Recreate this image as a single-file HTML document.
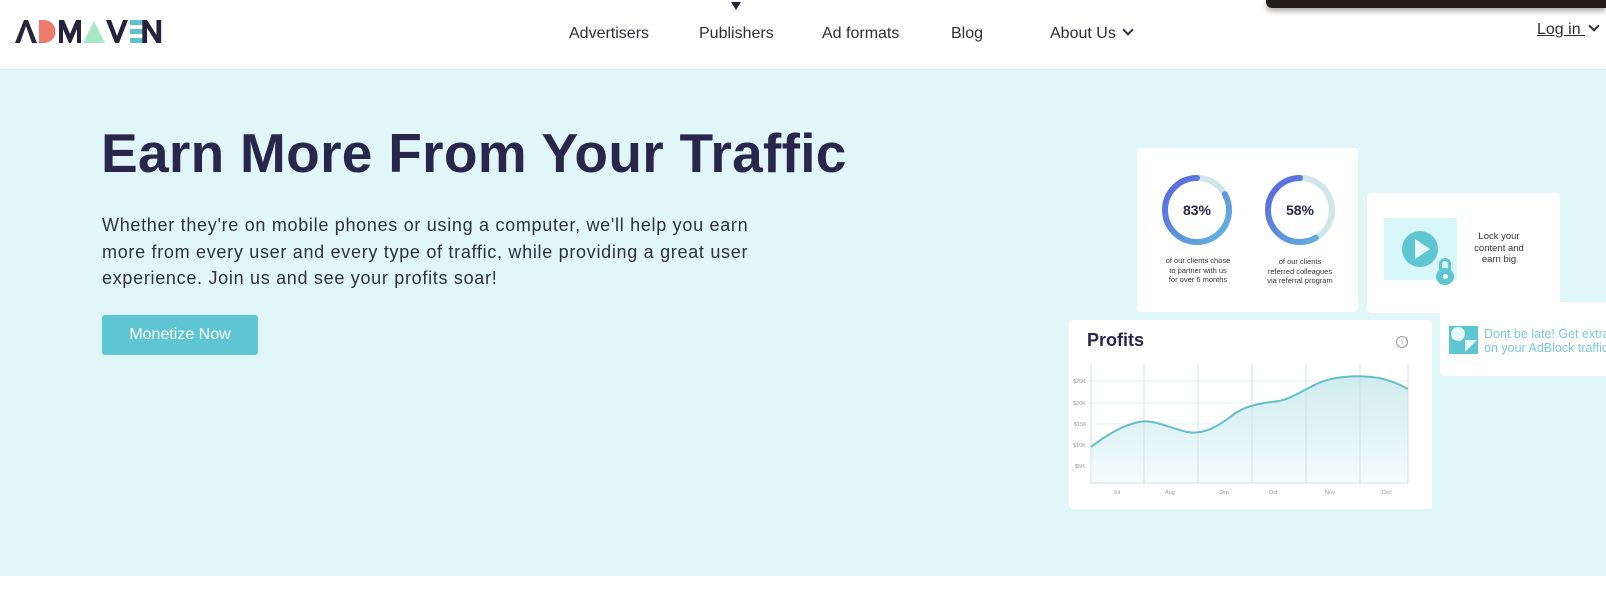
<!DOCTYPE html>
<html><head><meta charset="utf-8"><style>
*{margin:0;padding:0;box-sizing:border-box}
body{width:1606px;height:598px;overflow:hidden;background:#fff;font-family:"Liberation Sans",sans-serif;position:relative;color:#28264a}
.abs{position:absolute}
.nav a{position:absolute;top:25px;font-size:16px;color:#2e2e3a;text-decoration:none;white-space:nowrap}
.card{position:absolute;background:#fff;border-radius:4px}
</style></head><body>
<div class="abs" style="left:0;top:70px;width:1606px;height:506px;background:#e1f6f9"></div>
<div class="abs" style="left:0;top:69px;width:1606px;height:1px;background:#e3e6e8"></div>
<div class="abs" style="left:1266px;top:0;width:340px;height:8px;background:#231d1d;border-radius:0 0 0 6px;box-shadow:0 3px 6px rgba(0,0,0,.35)"></div>
<!-- logo -->
<svg class="abs" style="left:15px;top:20px" width="148" height="24" viewBox="0 0 148 24">
<path d="M0 23 L9 0 L13 0 L22 23 L17 23 L11 6 L5 23Z" fill="#26233a"/>
<path d="M24 0 H29 A11.5 11.5 0 0 1 29 23 H24Z" fill="#ee7a6b"/>
<path d="M44 23 V0 H49 L55 14 L61 0 H66 V23 H62 V9 L56 23 H54 L48 9 V23Z" fill="#26233a"/>
<path d="M68 23 L79 1 L90 23Z" fill="#a6e9c4"/>
<path d="M91 0 L96 0 L102 16 L108 0 L113 0 L104 23 L100 23Z" fill="#26233a"/>
<rect x="115" y="0" width="17" height="5" fill="#5fc3cf"/><rect x="115" y="9" width="13" height="5" fill="#5fc3cf"/><rect x="115" y="18" width="17" height="5" fill="#5fc3cf"/>
<path d="M127 23 V0 H132 L142 15 V0 H147 V23 H142 L132 8 V23Z" fill="#26233a" transform="translate(8 0) scale(0.94 1)"/>
</svg>
<div class="nav">
<a style="left:569px">Advertisers</a>
<a style="left:699px">Publishers</a>
<a style="left:822px">Ad formats</a>
<a style="left:951px">Blog</a>
<a style="left:1050px">About Us <span style="display:inline-block;width:8px;height:8px;border-right:2.5px solid #2e2e3a;border-bottom:2.5px solid #2e2e3a;transform:rotate(45deg);margin:0 0 4px 4px"></span></a>
<a style="left:1537px;top:21px;text-decoration:underline">Log in <span style="display:inline-block;width:8px;height:8px;border-right:2px solid #2e2e3a;border-bottom:2px solid #2e2e3a;transform:rotate(45deg);margin:0 0 4px 5px"></span></a>
</div>
<div class="abs" style="left:731px;top:2px;width:0;height:0;border-left:5px solid transparent;border-right:5px solid transparent;border-top:8px solid #26233a"></div>

<div class="abs" style="left:101px;top:121px;font-size:55px;font-weight:bold;color:#28264a;white-space:nowrap;letter-spacing:0.3px">Earn More From Your Traffic</div>
<div class="abs" style="left:102px;top:212px;width:665px;font-size:18px;line-height:26.5px;letter-spacing:0.7px;color:#2f2f3f">Whether they're on mobile phones or using a computer, we'll help you earn more from every user and every type of traffic, while providing a great user experience. Join us and see your profits soar!</div>
<div class="abs" style="left:102px;top:315px;width:156px;height:40px;background:#5ec6d2;border-radius:3px;color:#fff;font-size:16px;line-height:40px;text-align:center">Monetize Now</div>

<!-- card1 -->
<div class="card" style="left:1137px;top:148px;width:221px;height:164px">
<svg class="abs" style="left:22px;top:24px" width="76" height="76" viewBox="0 0 76 76">
<defs><linearGradient id="g1" x1="0" y1="0" x2="1" y2="1"><stop offset="0" stop-color="#62b8dc"/><stop offset="1" stop-color="#5a63e0"/></linearGradient></defs>
<circle cx="38" cy="38" r="32" fill="none" stroke="#cfe7ea" stroke-width="6"/>
<circle cx="38" cy="38" r="32" fill="none" stroke="url(#g1)" stroke-width="6" stroke-dasharray="167 201" transform="rotate(-90 38 38) scale(1 -1) translate(0 -76)" stroke-linecap="round"/>
<text x="38" y="43" text-anchor="middle" font-family="Liberation Sans" font-size="14" font-weight="bold" fill="#28264a">83%</text></svg>
<svg class="abs" style="left:125px;top:24px" width="76" height="76" viewBox="0 0 76 76">
<circle cx="38" cy="38" r="32" fill="none" stroke="#cfe7ea" stroke-width="6"/>
<circle cx="38" cy="38" r="32" fill="none" stroke="url(#g1)" stroke-width="6" stroke-dasharray="117 201" transform="rotate(-90 38 38) scale(1 -1) translate(0 -76)" stroke-linecap="round"/>
<text x="38" y="43" text-anchor="middle" font-family="Liberation Sans" font-size="14" font-weight="bold" fill="#28264a">58%</text></svg>
<div class="abs" style="left:6px;top:108px;width:110px;text-align:center;font-size:7.5px;line-height:9.5px;color:#333">of our clients chose<br>to partner with us<br>for over 6 months</div>
<div class="abs" style="left:108px;top:109px;width:110px;text-align:center;font-size:7.5px;line-height:9.5px;color:#333">of our clients<br>referred colleagues<br>via referral program</div>
</div>
<!-- card2 -->
<div class="card" style="left:1367px;top:193px;width:193px;height:120px">
<div class="abs" style="left:17px;top:25px;width:73px;height:62px;background:#d8f7fa"></div>
<div class="abs" style="left:35px;top:38px;width:36px;height:36px;border-radius:50%;background:#5ec6d2"></div>
<div class="abs" style="left:48px;top:46px;width:0;height:0;border-top:10px solid transparent;border-bottom:10px solid transparent;border-left:15px solid #e6fbfd"></div>
<div class="abs" style="left:72px;top:65px;width:12px;height:14px;border:3px solid #5ec6d2;border-bottom:none;border-radius:6px 6px 0 0"></div>
<div class="abs" style="left:69px;top:75px;width:18px;height:17px;border-radius:50%;background:#5ec6d2"></div>
<div class="abs" style="left:76px;top:81px;width:5px;height:5px;border-radius:50%;background:#fff"></div>
<div class="abs" style="left:102px;top:38px;width:60px;text-align:center;font-size:9.5px;line-height:11.5px;color:#333">Lock your content and earn big</div>
</div>
<!-- adblock card -->
<div class="card" style="left:1440px;top:302px;width:180px;height:74px">
<div class="abs" style="left:9px;top:24px;width:29px;height:28px;background:#5ec6d2;overflow:hidden">
<div class="abs" style="left:2px;top:1px;width:14px;height:14px;border-radius:50%;background:#e6fbfd"></div>
<div class="abs" style="left:16px;top:14px;width:0;height:0;border-left:12px solid #e6fbfd;border-bottom:12px solid transparent"></div></div>
<div class="abs" style="left:44px;top:25px;font-size:12.5px;line-height:14px;color:#79cbd0;white-space:nowrap">Dont be late! Get extra m<br>on your AdBlock traffic</div>
</div>
<!-- profits -->
<div class="card" style="left:1069px;top:320px;width:363px;height:189px">
<div class="abs" style="left:18px;top:10px;font-size:18px;font-weight:bold;color:#28264a">Profits</div>
<div class="abs" style="left:327px;top:16px;width:12px;height:12px;border:1px solid #999;border-radius:50%;font-size:8px;line-height:10px;text-align:center;color:#999">i</div>
<svg class="abs" style="left:0;top:0" width="363" height="189" viewBox="0 0 363 189">
<defs><linearGradient id="fa" x1="0" y1="0" x2="0" y2="1"><stop offset="0" stop-color="#cfecef"/><stop offset="1" stop-color="#f4fcfd"/></linearGradient></defs>
<g stroke="#e6f1f3" stroke-width="1">
<line x1="22" y1="61" x2="339" y2="61"/><line x1="22" y1="83" x2="339" y2="83"/><line x1="22" y1="104" x2="339" y2="104"/><line x1="22" y1="124" x2="339" y2="124"/><line x1="22" y1="145" x2="339" y2="145"/></g>
<path d="M22 127 C40 113 55 105 70 102 C85 99 100 108 118 112 C135 115 150 106 165 94 C180 84 195 83 210 81 C225 78 240 66 255 61 C270 56 290 55 310 58 C320 60 330 64 339 69 L339 163 L22 163Z" fill="url(#fa)"/>
<g stroke="#d4e0e3" stroke-width="1"><line x1="22" y1="44" x2="22" y2="163"/><line x1="75" y1="44" x2="75" y2="163"/><line x1="129" y1="44" x2="129" y2="163"/><line x1="183" y1="44" x2="183" y2="163"/><line x1="237" y1="44" x2="237" y2="163"/><line x1="291" y1="44" x2="291" y2="163"/><line x1="339" y1="44" x2="339" y2="163"/><line x1="22" y1="163" x2="339" y2="163"/></g>
<path d="M22 127 C40 113 55 105 70 102 C85 99 100 108 118 112 C135 115 150 106 165 94 C180 84 195 83 210 81 C225 78 240 66 255 61 C270 56 290 55 310 58 C320 60 330 64 339 69" fill="none" stroke="#64bfcb" stroke-width="2"/>
<g font-family="Liberation Sans" font-size="5.5" fill="#999">
<text x="4" y="63">$25K</text><text x="4" y="85">$20K</text><text x="5" y="106">$15K</text><text x="4" y="127">$10K</text><text x="6" y="148">$5K</text>
<text x="44" y="174">Jul</text><text x="96" y="174">Aug</text><text x="150" y="174">Sep</text><text x="200" y="174">Oct</text><text x="256" y="174">Nov</text><text x="313" y="174">Dec</text></g>
</svg>
</div>
</body></html>
